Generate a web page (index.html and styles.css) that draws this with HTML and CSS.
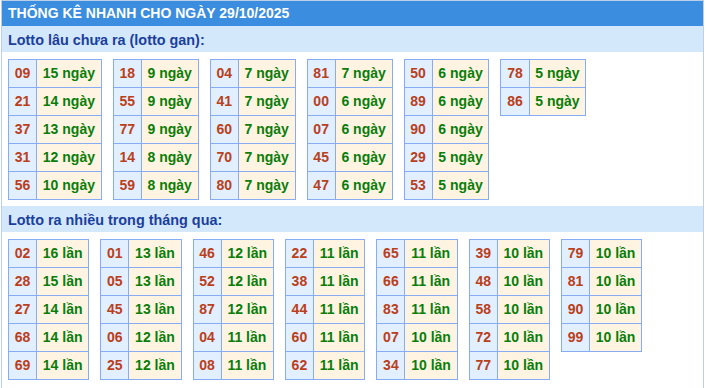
FILE: index.html
```html
<!DOCTYPE html>
<html lang="vi">
<head>
<meta charset="utf-8">
<title>Thống kê nhanh</title>
<link rel="stylesheet" href="styles.css">
</head>
<body>
<div class="box">
  <div class="head">THỐNG KÊ NHANH CHO NGÀY 29/10/2025</div>
  <div class="title">Lotto lâu chưa ra (lotto gan):</div>
  <div class="tables">
    <table><tr><td class="n">09</td><td class="v">15 ngày</td></tr><tr><td class="n">21</td><td class="v">14 ngày</td></tr><tr><td class="n">37</td><td class="v">13 ngày</td></tr><tr><td class="n">31</td><td class="v">12 ngày</td></tr><tr><td class="n">56</td><td class="v">10 ngày</td></tr></table>
    <table><tr><td class="n">18</td><td class="v">9 ngày</td></tr><tr><td class="n">55</td><td class="v">9 ngày</td></tr><tr><td class="n">77</td><td class="v">9 ngày</td></tr><tr><td class="n">14</td><td class="v">8 ngày</td></tr><tr><td class="n">59</td><td class="v">8 ngày</td></tr></table>
    <table><tr><td class="n">04</td><td class="v">7 ngày</td></tr><tr><td class="n">41</td><td class="v">7 ngày</td></tr><tr><td class="n">60</td><td class="v">7 ngày</td></tr><tr><td class="n">70</td><td class="v">7 ngày</td></tr><tr><td class="n">80</td><td class="v">7 ngày</td></tr></table>
    <table><tr><td class="n">81</td><td class="v">7 ngày</td></tr><tr><td class="n">00</td><td class="v">6 ngày</td></tr><tr><td class="n">07</td><td class="v">6 ngày</td></tr><tr><td class="n">45</td><td class="v">6 ngày</td></tr><tr><td class="n">47</td><td class="v">6 ngày</td></tr></table>
    <table><tr><td class="n">50</td><td class="v">6 ngày</td></tr><tr><td class="n">89</td><td class="v">6 ngày</td></tr><tr><td class="n">90</td><td class="v">6 ngày</td></tr><tr><td class="n">29</td><td class="v">5 ngày</td></tr><tr><td class="n">53</td><td class="v">5 ngày</td></tr></table>
    <table><tr><td class="n">78</td><td class="v">5 ngày</td></tr><tr><td class="n">86</td><td class="v">5 ngày</td></tr></table>
  </div>
  <div class="title">Lotto ra nhiều trong tháng qua:</div>
  <div class="tables">
    <table><tr><td class="n">02</td><td class="v">16 lần</td></tr><tr><td class="n">28</td><td class="v">15 lần</td></tr><tr><td class="n">27</td><td class="v">14 lần</td></tr><tr><td class="n">68</td><td class="v">14 lần</td></tr><tr><td class="n">69</td><td class="v">14 lần</td></tr></table>
    <table><tr><td class="n">01</td><td class="v">13 lần</td></tr><tr><td class="n">05</td><td class="v">13 lần</td></tr><tr><td class="n">45</td><td class="v">13 lần</td></tr><tr><td class="n">06</td><td class="v">12 lần</td></tr><tr><td class="n">25</td><td class="v">12 lần</td></tr></table>
    <table><tr><td class="n">46</td><td class="v">12 lần</td></tr><tr><td class="n">52</td><td class="v">12 lần</td></tr><tr><td class="n">87</td><td class="v">12 lần</td></tr><tr><td class="n">04</td><td class="v">11 lần</td></tr><tr><td class="n">08</td><td class="v">11 lần</td></tr></table>
    <table><tr><td class="n">22</td><td class="v">11 lần</td></tr><tr><td class="n">38</td><td class="v">11 lần</td></tr><tr><td class="n">44</td><td class="v">11 lần</td></tr><tr><td class="n">60</td><td class="v">11 lần</td></tr><tr><td class="n">62</td><td class="v">11 lần</td></tr></table>
    <table><tr><td class="n">65</td><td class="v">11 lần</td></tr><tr><td class="n">66</td><td class="v">11 lần</td></tr><tr><td class="n">83</td><td class="v">11 lần</td></tr><tr><td class="n">07</td><td class="v">10 lần</td></tr><tr><td class="n">34</td><td class="v">10 lần</td></tr></table>
    <table><tr><td class="n">39</td><td class="v">10 lần</td></tr><tr><td class="n">48</td><td class="v">10 lần</td></tr><tr><td class="n">58</td><td class="v">10 lần</td></tr><tr><td class="n">72</td><td class="v">10 lần</td></tr><tr><td class="n">77</td><td class="v">10 lần</td></tr></table>
    <table><tr><td class="n">79</td><td class="v">10 lần</td></tr><tr><td class="n">81</td><td class="v">10 lần</td></tr><tr><td class="n">90</td><td class="v">10 lần</td></tr><tr><td class="n">99</td><td class="v">10 lần</td></tr></table>
  </div>
</div>
</body>
</html>
```

FILE: styles.css
```css
html, body {
  margin: 0;
  padding: 0;
  background: #ffffff;
}
body {
  font-family: "Liberation Sans", Arial, sans-serif;
}
.box {
  margin-left: 1px;
  width: 701px;
  border: 1px solid #bccfe8;
  min-height: 400px;
}
.head {
  height: 25px;
  line-height: 25px;
  background: #3b8de0;
  color: #ffffff;
  font-size: 14px;
  font-weight: bold;
  padding-left: 6px;
}
.title {
  height: 26px;
  line-height: 28px;
  background: #d4e8fc;
  color: #1a3f9c;
  font-size: 14.4px;
  font-weight: bold;
  padding-left: 6px;
}
.tables {
  display: flex;
  align-items: flex-start;
  gap: 11px;
  padding: 7px 6px 6px;
}
table {
  border-collapse: collapse;
}
td {
  border: 1px solid #88acf4;
  padding: 0 5.75px;
  line-height: 27px;
  font-size: 14px;
  font-weight: bold;
  white-space: nowrap;
}
td.n {
  background: #e2efff;
  color: #b8401c;
}
td.v {
  background: #fff4e2;
  color: #0a7d0a;
}
```
